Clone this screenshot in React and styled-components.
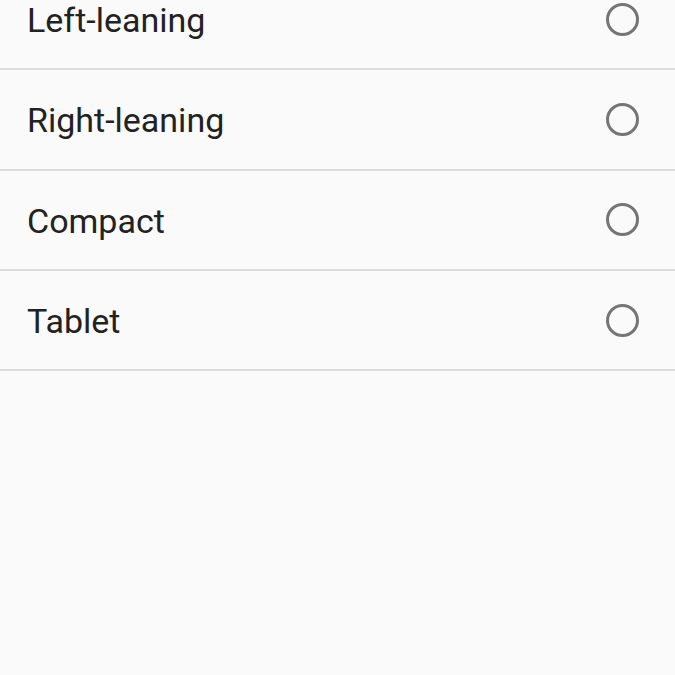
import React from "react";
import styled, { createGlobalStyle } from "styled-components";

const Global = createGlobalStyle`
  html, body { margin: 0; padding: 0; background: #fafafa; }
  body { font-family: Roboto, "Noto Sans", sans-serif; overflow: hidden; }
`;

const Page = styled.div`
  width: 675px;
  height: 675px;
  background: #fafafa;
  overflow: hidden;
`;

const List = styled.ul`
  list-style: none;
  margin: -30px 0 0 0;
  padding: 0;
`;

const Row = styled.li`
  height: 98.3px;
  display: flex;
  align-items: center;
  justify-content: space-between;
  padding: 0 36px 0 27px;
  border-bottom: 2px solid #dcdcdc;
`;

const Label = styled.span`
  font-size: 34px;
  color: #222222;
  margin-top: 2px;
`;

const Radio = styled.span`
  box-sizing: border-box;
  width: 33px;
  height: 33px;
  border: 3px solid #757575;
  border-radius: 50%;
  margin-top: ${(p) => p.$offset || 0}px;
`;

const items = ["Left-leaning", "Right-leaning", "Compact", "Tablet"];

export default function App() {
  return (
    <Page>
      <Global />
      <List>
        {items.map((t) => (
          <Row key={t}>
            <Label>{t}</Label>
            <Radio $offset={0} />
          </Row>
        ))}
      </List>
    </Page>
  );
}
